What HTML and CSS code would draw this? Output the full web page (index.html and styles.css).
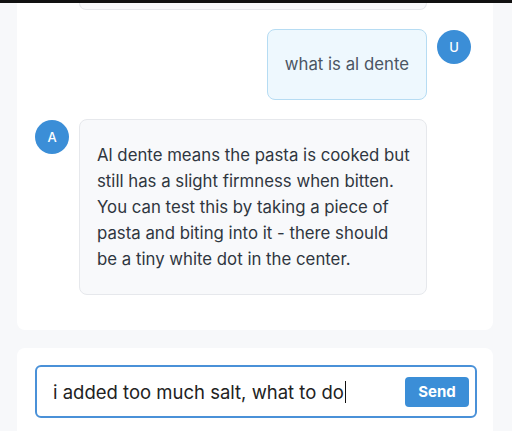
FILE: index.html
```html
<!DOCTYPE html>
<html>
<head>
<meta charset="utf-8">
<link rel="stylesheet" href="styles.css">
</head>
<body>
<div class="topbar"></div>
<div class="chat-card">
  <div class="prev-bubble"></div>
  <div class="row row-user">
    <div class="bubble bubble-user">what is al dente</div>
    <div class="avatar">U</div>
  </div>
  <div class="row row-assistant">
    <div class="avatar">A</div>
    <div class="bubble bubble-assistant">Al dente means the pasta is cooked but still has a slight firmness when bitten. You can test this by taking a piece of pasta and biting into it - there should be a tiny white dot in the center.</div>
  </div>
</div>
<div class="input-card">
  <div class="input-box">
    <span class="input-text">i added too much salt, what to do<span class="caret"></span></span>
    <button class="send">Send</button>
  </div>
</div>
</body>
</html>
```
FILE: styles.css
```css
html, body {
  margin: 0;
  padding: 0;
}
body {
  background: #f7f8fa;
  font-family: Inter, "Noto Sans", "Liberation Sans", sans-serif;
  width: 512px;
  height: 431px;
  overflow: hidden;
}
.topbar {
  height: 3px;
  background: #111;
}
.chat-card {
  margin: 0 19px 0 17px;
  background: #fff;
  border-radius: 0 0 8px 8px;
  padding: 0 22px 35px 18px;
  display: flex;
  flex-direction: column;
}
.prev-bubble {
  margin-left: 44px;
  width: 346px;
  height: 6px;
  border: 1px solid #e6e8ec;
  border-top: none;
  border-radius: 0 0 8px 8px;
  background: #f8f9fb;
}
.row {
  display: flex;
  align-items: flex-start;
  gap: 10px;
}
.row-user {
  justify-content: flex-end;
  margin-top: 19px;
}
.row-assistant {
  margin-top: 19px;
}
.avatar {
  width: 34px;
  height: 34px;
  border-radius: 50%;
  background: #3b8ed7;
  color: #fff;
  font-size: 13px;
  font-weight: 500;
  display: flex;
  align-items: center;
  justify-content: center;
  flex: none;
  margin-top: 1px;
}
.bubble {
  border-radius: 8px;
  box-sizing: border-box;
  font-size: 16.8px;
}
.bubble-user {
  background: #eef8fe;
  border: 1px solid #b6dcf3;
  color: #4b5563;
  padding: 0 17px;
  height: 71px;
  line-height: 69px;
}
.bubble-assistant {
  width: 348px;
  background: #f8f9fb;
  border: 1px solid #e6e8ec;
  color: #2f3640;
  padding: 22px 16px 22px 17px;
  line-height: 26px;
}
.input-card {
  margin: 18px 19px 0 17px;
  background: #fff;
  border-radius: 8px 8px 0 0;
  padding: 17px 16px 20px 18px;
}
.input-box {
  height: 53px;
  box-sizing: border-box;
  border: 2px solid #4a91d8;
  border-radius: 6px;
  display: flex;
  align-items: center;
  justify-content: space-between;
  padding: 0 6px 0 16px;
}
.input-text {
  font-size: 18.5px;
  color: #222;
  display: flex;
  align-items: center;
}
.caret {
  display: inline-block;
  width: 1px;
  height: 22px;
  background: #111;
  margin-left: 1px;
}
.send {
  width: 64px;
  height: 30px;
  border: none;
  border-radius: 4px;
  background: #3b8ed7;
  color: #fff;
  font-family: Inter, "Noto Sans", "Liberation Sans", sans-serif;
  font-weight: 700;
  font-size: 15px;
  padding: 0;
}
```
